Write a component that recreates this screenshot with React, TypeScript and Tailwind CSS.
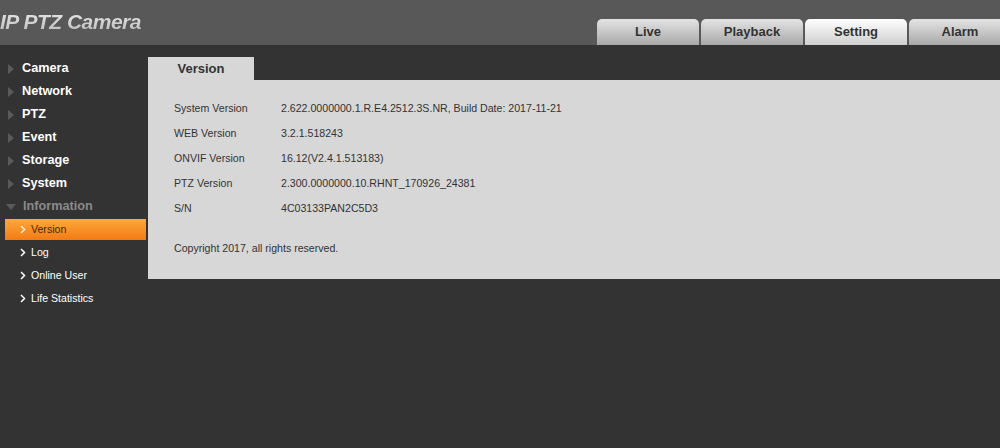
const topTabs = ["Live", "Playback", "Setting", "Alarm"];
const menu = ["Camera", "Network", "PTZ", "Event", "Storage", "System"];
const subMenu = ["Version", "Log", "Online User", "Life Statistics"];
const rows = [
  ["System Version", "2.622.0000000.1.R.E4.2512.3S.NR, Build Date: 2017-11-21"],
  ["WEB Version", "3.2.1.518243"],
  ["ONVIF Version", "16.12(V2.4.1.513183)"],
  ["PTZ Version", "2.300.0000000.10.RHNT_170926_24381"],
  ["S/N", "4C03133PAN2C5D3"],
];

function Chevron({ className }: { className?: string }) {
  return (
    <svg width="6" height="9" viewBox="0 0 6 9" className={className}>
      <path d="M1 1 L4.5 4.5 L1 8" fill="none" stroke="currentColor" strokeWidth="1.5" />
    </svg>
  );
}

export default function App() {
  return (
    <div className="w-[1000px] h-[448px] bg-[#333333] font-['Liberation_Sans',Arial,sans-serif] overflow-hidden">
      <header className="h-[45px] bg-[#585858] flex items-start overflow-hidden">
        <div className="w-[597px] shrink-0">
          <h1 className="pt-[8px] text-[21px] font-bold italic tracking-[-0.5px] leading-[27px] bg-gradient-to-b from-white to-[#b8b8b8] bg-clip-text text-transparent w-fit">
            IP PTZ Camera
          </h1>
        </div>
        <nav className="flex gap-[2px] mt-[19px] shrink-0">
          {topTabs.map((t) => (
            <div
              key={t}
              className={
                "w-[102px] h-[26px] rounded-t-[5px] flex items-center justify-center text-[13px] font-bold text-[#333] " +
                (t === "Setting"
                  ? "bg-gradient-to-b from-white to-[#cfcfcf]"
                  : "bg-gradient-to-b from-[#e4e4e4] to-[#a9a9a9]")
              }
            >
              {t}
            </div>
          ))}
        </nav>
      </header>

      <div className="flex pt-[12px]">
        <aside className="w-[148px] shrink-0">
          {menu.map((m) => (
            <div key={m} className="h-[23px] flex items-center">
              <span className="ml-[8px] w-0 h-0 border-y-[5px] border-y-transparent border-l-[6px] border-l-[#5a5a5a]" />
              <span className="ml-[8px] text-[12.7px] font-bold text-white">{m}</span>
            </div>
          ))}
          <div className="h-[23px] flex items-center">
            <span className="ml-[6px] w-0 h-0 border-x-[5px] border-x-transparent border-t-[6px] border-t-[#5a5a5a]" />
            <span className="ml-[7px] text-[12.7px] font-bold text-[#8a8a8a]">Information</span>
          </div>
          {subMenu.map((s) => (
            <div key={s} className="h-[23px] flex items-center">
              <div
                className={
                  "ml-[5px] w-[141px] h-[21px] flex items-center text-[10.6px] " +
                  (s === "Version"
                    ? "bg-gradient-to-b from-[#ffa83a] to-[#f27a10] text-[#3a2a1a]"
                    : "text-white")
                }
              >
                <Chevron className={"ml-[15px] " + (s === "Version" ? "text-[#fff0d0]" : "text-white")} />
                <span className="ml-[5px]">{s}</span>
              </div>
            </div>
          ))}
        </aside>

        <main className="flex-1">
          <div className="w-[106px] h-[23px] bg-[#d7d7d7] flex items-center justify-center text-[13px] font-bold text-[#333]">
            Version
          </div>
          <section className="bg-[#d7d7d7] pt-[16px] pb-[18px] pl-[26px] text-[10.6px] text-[#333]">
            {rows.map(([k, v]) => (
              <div key={k} className="h-[25px] flex items-center">
                <span className="w-[107px]">{k}</span>
                <span>{v}</span>
              </div>
            ))}
            <div className="h-[25px] mt-[15px] flex items-center">Copyright 2017, all rights reserved.</div>
          </section>
        </main>
      </div>
    </div>
  );
}
